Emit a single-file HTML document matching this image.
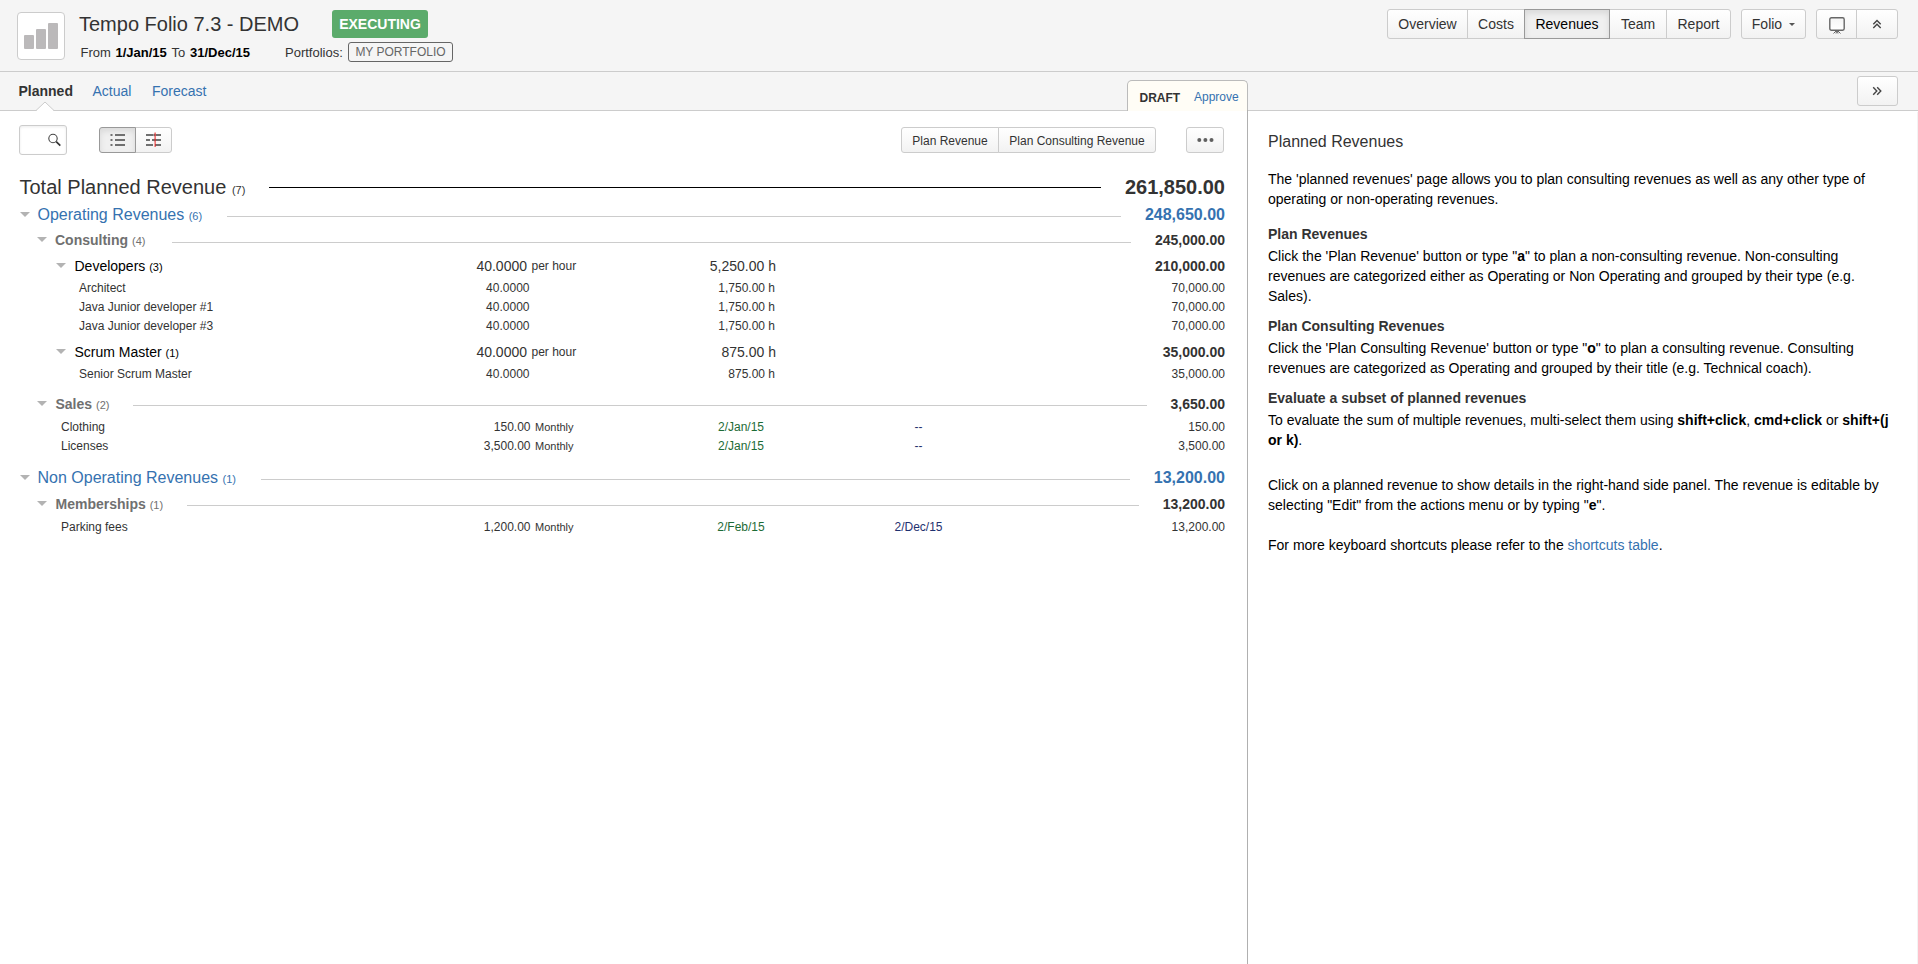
<!DOCTYPE html>
<html><head><meta charset="utf-8"><title>Tempo Folio</title><style>
*{box-sizing:border-box}
html,body{margin:0;padding:0}
body{width:1918px;height:964px;overflow:hidden;position:relative;background:#fff;font-family:"Liberation Sans",sans-serif;color:#333}
.t{position:absolute;white-space:nowrap}
b{font-weight:700}
#hdr{position:absolute;left:0;top:0;width:1918px;height:72px;background:#f5f5f5;border-bottom:1px solid #ccc}
#tabrow{position:absolute;left:0;top:72px;width:1918px;height:39px;background:#f5f5f5;border-bottom:1px solid #ccc}
#logo{position:absolute;left:17px;top:12px;width:48px;height:48px;background:#fff;border:1px solid #ccc;border-radius:4px}
#logo i{position:absolute;width:10px;background:#bbb9ba;border-radius:1px}
#exec{position:absolute;left:332px;top:10px;width:96px;height:28px;background:#5bab6b;border-radius:3px;color:#fff;font-weight:700;font-size:14px;line-height:28px;text-align:center}
#port{position:absolute;left:348px;top:42px;width:105px;height:20px;border:1px solid #666;border-radius:3px;color:#666;font-size:12px;line-height:18px;text-align:center}
.btn{position:absolute;background:linear-gradient(#fff,#f2f2f2);border:1px solid #ccc;color:#333;font-size:14px;display:flex;align-items:center;justify-content:center;white-space:nowrap}
.btn.first{border-top-left-radius:3px;border-bottom-left-radius:3px}
.btn.last{border-top-right-radius:3px;border-bottom-right-radius:3px}
.btn.active{background:#f0f0f0;border-color:#999;box-shadow:inset 0 3px 6px rgba(0,0,0,.10);z-index:2;color:#000}
.btn.sm{font-size:12px;padding-top:1px}
.caret{display:inline-block;width:0;height:0;border-left:3px solid transparent;border-right:3px solid transparent;border-top:3px solid #555;margin-left:7px;margin-top:0px}
#draft{position:absolute;left:1127px;top:80px;width:121px;height:31px;background:#fffdf6;border:1px solid #bbb;border-bottom:none;border-radius:5px 5px 0 0}
#vdiv{position:absolute;left:1247px;top:110px;width:1px;height:854px;background:#b0b0b0}
#redge{position:absolute;left:1917px;top:112px;width:1px;height:852px;background:#f3f3f3}
#search{position:absolute;left:19px;top:125px;width:48px;height:30px;border:1px solid #ccc;border-radius:3px;background:#fff;box-shadow:inset 0 1px 3px rgba(0,0,0,.08)}
.tri{position:absolute;width:0;height:0;border-left:5px solid transparent;border-right:5px solid transparent;border-top:5px solid #b3b3b3}
.hl{position:absolute;height:1px}
.cnt{font-size:11px;font-weight:400}
.p{position:absolute;left:1268px;width:630px;color:#000;font-size:14px;line-height:20px}
.p.h5{font-weight:700;color:#333}
</style></head><body>
<div id="hdr"></div><div id="tabrow"></div><div id="logo"><i style="left:6px;top:22px;height:14px"></i><i style="left:18px;top:16px;height:20px"></i><i style="left:30px;top:10px;height:26px"></i></div><div class="t " style="left:79px;top:14.07px;font-size:20px;line-height:20px;color:#333;font-weight:400;">Tempo Folio 7.3 - DEMO</div>
<div id="exec">EXECUTING</div><div class="t " style="left:80.5px;top:45.99px;font-size:13px;line-height:13px;color:#333;font-weight:400;">From</div>
<div class="t " style="left:115.5px;top:45.99px;font-size:13px;line-height:13px;color:#000;font-weight:700;">1/Jan/15</div>
<div class="t " style="left:171.5px;top:45.99px;font-size:13px;line-height:13px;color:#333;font-weight:400;">To</div>
<div class="t " style="left:190px;top:45.99px;font-size:13px;line-height:13px;color:#000;font-weight:700;">31/Dec/15</div>
<div class="t " style="left:285px;top:45.99px;font-size:13px;line-height:13px;color:#333;font-weight:400;">Portfolios:</div>
<div id="port">MY PORTFOLIO</div><div class="btn first" style="left:1387px;width:81px;top:9px;height:30px;">Overview</div><div class="btn" style="left:1467px;width:58px;top:9px;height:30px;">Costs</div><div class="btn active" style="left:1524px;width:86px;top:9px;height:30px;">Revenues</div><div class="btn" style="left:1609px;width:58px;top:9px;height:30px;">Team</div><div class="btn last" style="left:1666px;width:65px;top:9px;height:30px;">Report</div><div class="btn first last" style="left:1741px;width:65px;top:9px;height:30px;">Folio <span class="caret"></span></div><div class="btn first" style="left:1816px;width:41px;top:9px;height:30px;"><svg width="16" height="17" viewBox="0 0 16 17" style="margin-top:2px"><defs><linearGradient id="mg" x1="0" y1="0" x2="0" y2="1"><stop offset="0" stop-color="#f4f4f4"/><stop offset="1" stop-color="#fff"/></linearGradient></defs><rect x="0.8" y="0.8" width="14.4" height="12.4" rx="1.6" fill="url(#mg)" stroke="#666" stroke-width="1.4"/><path d="M8 13 L4.5 16.5 M8 13 L7 16.5 M8 13 L9 16.5 M8 13 L11.5 16.5" stroke="#666" stroke-width="1" fill="none"/></svg></div><div class="btn last" style="left:1856px;width:42px;top:9px;height:30px;"><svg width="10" height="10" viewBox="0 0 10 10"><path d="M1.3 5.2 L5 1.6 L8.7 5.2 M1.3 8.9 L5 5.3 L8.7 8.9" stroke="#444" stroke-width="1.4" fill="none"/></svg></div><div class="t " style="left:18.5px;top:84.15px;font-size:14px;line-height:14px;color:#333;font-weight:700;">Planned</div>
<div class="t " style="left:92.5px;top:84.15px;font-size:14px;line-height:14px;color:#3572b0;font-weight:400;">Actual</div>
<div class="t " style="left:152px;top:84.15px;font-size:14px;line-height:14px;color:#3572b0;font-weight:400;">Forecast</div>
<svg id="notch" width="18" height="10" style="position:absolute;left:36px;top:101px"><path d="M0 9.5 L9 1 L18 9.5" fill="#fff" stroke="#ccc" stroke-width="1"/><rect x="1" y="9" width="16" height="2" fill="#fff"/></svg><div id="draft"></div><div class="t " style="left:1139.5px;top:91.84px;font-size:12px;line-height:12px;color:#333;font-weight:700;">DRAFT</div>
<div class="t " style="left:1194px;top:90.84px;font-size:12px;line-height:12px;color:#3572b0;font-weight:400;">Approve</div>
<div class="btn first last" style="left:1857px;width:41px;top:76px;height:30px;"><svg width="10" height="10" viewBox="0 0 10 10" style="margin-left:-2px"><path d="M1.2 1.2 L4.8 5 L1.2 8.8 M5.2 1.2 L8.8 5 L5.2 8.8" stroke="#444" stroke-width="1.4" fill="none"/></svg></div><div id="vdiv"></div><div id="redge"></div><div id="search"><svg width="14" height="14" viewBox="0 0 14 14" style="position:absolute;left:28px;top:7px"><circle cx="5" cy="5.5" r="4.2" fill="none" stroke="#444" stroke-width="1.1"/><path d="M8.2 8.7 L12.3 12.6" stroke="#333" stroke-width="1.7"/></svg></div><div class="btn first active" style="left:99px;width:37px;top:127px;height:26px;"><svg width="17" height="16" viewBox="0 0 17 16"><g fill="#707070"><rect x="1.5" y="2" width="2" height="2"/><rect x="6" y="2" width="10" height="2"/><rect x="1.5" y="7" width="2" height="2"/><rect x="6" y="7" width="10" height="2"/><rect x="1.5" y="12" width="2" height="2"/><rect x="6" y="12" width="10" height="2"/></g></svg></div><div class="btn last" style="left:135px;width:37px;top:127px;height:26px;"><svg width="17" height="16" viewBox="0 0 17 16"><g fill="#707070"><rect x="1" y="2" width="7" height="2"/><rect x="11" y="2" width="5" height="2"/><circle cx="9.5" cy="3" r="1.3"/><rect x="1" y="7" width="4" height="2"/><rect x="7" y="7" width="9" height="2"/><circle cx="9.5" cy="8" r="1.3"/><rect x="1" y="12" width="7" height="2"/><rect x="10" y="12" width="6" height="2"/></g><rect x="9.6" y="0.5" width="1" height="14.5" fill="#e22"/></svg></div><div class="btn first sm" style="left:901px;width:98px;top:127px;height:26px;">Plan Revenue</div><div class="btn last sm" style="left:998px;width:158px;top:127px;height:26px;">Plan Consulting Revenue</div><div class="btn first last" style="left:1186px;width:38px;top:127px;height:26px;"><svg width="17" height="6" viewBox="0 0 17 6" style="margin-top:-1px"><g fill="#606060"><circle cx="2.3" cy="3" r="2"/><circle cx="8.4" cy="3" r="2"/><circle cx="14.5" cy="3" r="2"/></g></svg></div><div class="t " style="left:19.5px;top:177.07px;font-size:20px;line-height:20px;color:#333;font-weight:400;">Total Planned Revenue <span style="font-size:11px">(7)</span></div>
<div class="hl" style="left:269px;top:187px;width:832px;background:#000"></div>
<div class="t " style="right:693px;top:177.07px;font-size:20px;line-height:20px;color:#333;font-weight:700;">261,850.00</div>
<div class="tri" style="left:20px;top:212px"></div>
<div class="t " style="left:37.5px;top:207.45px;font-size:16px;line-height:16px;color:#3572b0;font-weight:400;">Operating Revenues <span style="font-size:11px">(6)</span></div>
<div class="hl" style="left:227px;top:216px;width:894px;background:#ccc"></div>
<div class="t " style="right:693px;top:207.45px;font-size:16px;line-height:16px;color:#3572b0;font-weight:700;">248,650.00</div>
<div class="tri" style="left:37px;top:237px"></div>
<div class="t " style="left:55px;top:233.15px;font-size:14px;line-height:14px;color:#707070;font-weight:700;">Consulting <span class="cnt">(4)</span></div>
<div class="hl" style="left:172px;top:242px;width:959px;background:#ccc"></div>
<div class="t " style="right:693px;top:233.15px;font-size:14px;line-height:14px;color:#333;font-weight:700;">245,000.00</div>
<div class="tri" style="left:56px;top:263px"></div>
<div class="t " style="left:74.5px;top:259.15px;font-size:14px;line-height:14px;color:#000;font-weight:400;">Developers <span style="font-size:11px;margin-left:0px">(3)</span></div>
<div class="t " style="right:1391px;top:259.15px;font-size:14px;line-height:14px;color:#333;font-weight:400;">40.0000</div>
<div class="t " style="left:531.5px;top:259.84px;font-size:12px;line-height:12px;color:#333;font-weight:400;">per hour</div>
<div class="t " style="right:1142px;top:259.15px;font-size:14px;line-height:14px;color:#333;font-weight:400;">5,250.00 h</div>
<div class="t " style="right:693px;top:259.15px;font-size:14px;line-height:14px;color:#333;font-weight:700;">210,000.00</div>
<div class="t " style="left:79px;top:281.84px;font-size:12px;line-height:12px;color:#333;font-weight:400;">Architect</div>
<div class="t " style="right:1388.5px;top:281.84px;font-size:12px;line-height:12px;color:#333;font-weight:400;">40.0000</div>
<div class="t " style="right:1143px;top:281.84px;font-size:12px;line-height:12px;color:#333;font-weight:400;">1,750.00 h</div>
<div class="t " style="right:693px;top:281.84px;font-size:12px;line-height:12px;color:#333;font-weight:400;">70,000.00</div>
<div class="t " style="left:79px;top:300.84px;font-size:12px;line-height:12px;color:#333;font-weight:400;">Java Junior developer #1</div>
<div class="t " style="right:1388.5px;top:300.84px;font-size:12px;line-height:12px;color:#333;font-weight:400;">40.0000</div>
<div class="t " style="right:1143px;top:300.84px;font-size:12px;line-height:12px;color:#333;font-weight:400;">1,750.00 h</div>
<div class="t " style="right:693px;top:300.84px;font-size:12px;line-height:12px;color:#333;font-weight:400;">70,000.00</div>
<div class="t " style="left:79px;top:319.84px;font-size:12px;line-height:12px;color:#333;font-weight:400;">Java Junior developer #3</div>
<div class="t " style="right:1388.5px;top:319.84px;font-size:12px;line-height:12px;color:#333;font-weight:400;">40.0000</div>
<div class="t " style="right:1143px;top:319.84px;font-size:12px;line-height:12px;color:#333;font-weight:400;">1,750.00 h</div>
<div class="t " style="right:693px;top:319.84px;font-size:12px;line-height:12px;color:#333;font-weight:400;">70,000.00</div>
<div class="tri" style="left:56px;top:349px"></div>
<div class="t " style="left:74.5px;top:345.15px;font-size:14px;line-height:14px;color:#000;font-weight:400;">Scrum Master <span style="font-size:11px;margin-left:0px">(1)</span></div>
<div class="t " style="right:1391px;top:345.15px;font-size:14px;line-height:14px;color:#333;font-weight:400;">40.0000</div>
<div class="t " style="left:531.5px;top:345.84px;font-size:12px;line-height:12px;color:#333;font-weight:400;">per hour</div>
<div class="t " style="right:1142px;top:345.15px;font-size:14px;line-height:14px;color:#333;font-weight:400;">875.00 h</div>
<div class="t " style="right:693px;top:345.15px;font-size:14px;line-height:14px;color:#333;font-weight:700;">35,000.00</div>
<div class="t " style="left:79px;top:367.84px;font-size:12px;line-height:12px;color:#333;font-weight:400;">Senior Scrum Master</div>
<div class="t " style="right:1388.5px;top:367.84px;font-size:12px;line-height:12px;color:#333;font-weight:400;">40.0000</div>
<div class="t " style="right:1143px;top:367.84px;font-size:12px;line-height:12px;color:#333;font-weight:400;">875.00 h</div>
<div class="t " style="right:693px;top:367.84px;font-size:12px;line-height:12px;color:#333;font-weight:400;">35,000.00</div>
<div class="tri" style="left:37px;top:401px"></div>
<div class="t " style="left:55.5px;top:397.15px;font-size:14px;line-height:14px;color:#707070;font-weight:700;">Sales <span class="cnt">(2)</span></div>
<div class="hl" style="left:133px;top:405px;width:1014px;background:#ccc"></div>
<div class="t " style="right:693px;top:397.15px;font-size:14px;line-height:14px;color:#333;font-weight:700;">3,650.00</div>
<div class="t " style="left:61px;top:420.84px;font-size:12px;line-height:12px;color:#333;font-weight:400;">Clothing</div>
<div class="t " style="right:1387.5px;top:420.84px;font-size:12px;line-height:12px;color:#333;font-weight:400;">150.00</div>
<div class="t " style="left:535px;top:421.69px;font-size:11px;line-height:11px;color:#333;font-weight:400;">Monthly</div>
<div class="t " style="left:541px;width:400px;text-align:center;top:420.84px;font-size:12px;line-height:12px;color:#1d6b36;font-weight:400;">2/Jan/15</div>
<div class="t " style="left:718.5px;width:400px;text-align:center;top:420.84px;font-size:12px;line-height:12px;color:#1f3170;font-weight:400;">--</div>
<div class="t " style="right:693px;top:420.84px;font-size:12px;line-height:12px;color:#333;font-weight:400;">150.00</div>
<div class="t " style="left:61px;top:439.84px;font-size:12px;line-height:12px;color:#333;font-weight:400;">Licenses</div>
<div class="t " style="right:1387.5px;top:439.84px;font-size:12px;line-height:12px;color:#333;font-weight:400;">3,500.00</div>
<div class="t " style="left:535px;top:440.69px;font-size:11px;line-height:11px;color:#333;font-weight:400;">Monthly</div>
<div class="t " style="left:541px;width:400px;text-align:center;top:439.84px;font-size:12px;line-height:12px;color:#1d6b36;font-weight:400;">2/Jan/15</div>
<div class="t " style="left:718.5px;width:400px;text-align:center;top:439.84px;font-size:12px;line-height:12px;color:#1f3170;font-weight:400;">--</div>
<div class="t " style="right:693px;top:439.84px;font-size:12px;line-height:12px;color:#333;font-weight:400;">3,500.00</div>
<div class="tri" style="left:20px;top:475px"></div>
<div class="t " style="left:37.5px;top:470.45px;font-size:16px;line-height:16px;color:#3572b0;font-weight:400;">Non Operating Revenues <span style="font-size:11px">(1)</span></div>
<div class="hl" style="left:261px;top:479px;width:869px;background:#ccc"></div>
<div class="t " style="right:693px;top:470.45px;font-size:16px;line-height:16px;color:#3572b0;font-weight:700;">13,200.00</div>
<div class="tri" style="left:37px;top:501px"></div>
<div class="t " style="left:55.5px;top:497.15px;font-size:14px;line-height:14px;color:#707070;font-weight:700;">Memberships <span class="cnt">(1)</span></div>
<div class="hl" style="left:187px;top:505px;width:952px;background:#ccc"></div>
<div class="t " style="right:693px;top:497.15px;font-size:14px;line-height:14px;color:#333;font-weight:700;">13,200.00</div>
<div class="t " style="left:61px;top:520.84px;font-size:12px;line-height:12px;color:#333;font-weight:400;">Parking fees</div>
<div class="t " style="right:1387.5px;top:520.84px;font-size:12px;line-height:12px;color:#333;font-weight:400;">1,200.00</div>
<div class="t " style="left:535px;top:521.69px;font-size:11px;line-height:11px;color:#333;font-weight:400;">Monthly</div>
<div class="t " style="left:541px;width:400px;text-align:center;top:520.84px;font-size:12px;line-height:12px;color:#1d6b36;font-weight:400;">2/Feb/15</div>
<div class="t " style="left:718.5px;width:400px;text-align:center;top:520.84px;font-size:12px;line-height:12px;color:#1f3170;font-weight:400;">2/Dec/15</div>
<div class="t " style="right:693px;top:520.84px;font-size:12px;line-height:12px;color:#333;font-weight:400;">13,200.00</div>
<div class="t" style="left:1268px;top:134.45px;font-size:16px;line-height:16px;color:#333">Planned Revenues</div><div class="p" style="top:169px">The 'planned revenues' page allows you to plan consulting revenues as well as any other type of operating or non-operating revenues.</div>
<div class="p h5" style="top:224px">Plan Revenues</div>
<div class="p" style="top:246px">Click the 'Plan Revenue' button or type "<b>a</b>" to plan a non-consulting revenue. Non-consulting revenues are categorized either as Operating or Non Operating and grouped by their type (e.g. Sales).</div>
<div class="p h5" style="top:316px">Plan Consulting Revenues</div>
<div class="p" style="top:338px">Click the 'Plan Consulting Revenue' button or type "<b>o</b>" to plan a consulting revenue. Consulting revenues are categorized as Operating and grouped by their title (e.g. Technical coach).</div>
<div class="p h5" style="top:388px">Evaluate a subset of planned revenues</div>
<div class="p" style="top:410px">To evaluate the sum of multiple revenues, multi-select them using <b>shift+click</b>, <b>cmd+click</b> or <b>shift+(j or k)</b>.</div>
<div class="p" style="top:475px">Click on a planned revenue to show details in the right-hand side panel. The revenue is editable by selecting "Edit" from the actions menu or by typing "<b>e</b>".</div>
<div class="p" style="top:535px">For more keyboard shortcuts please refer to the <span style="color:#3572b0">shortcuts table</span>.</div>
</body></html>
